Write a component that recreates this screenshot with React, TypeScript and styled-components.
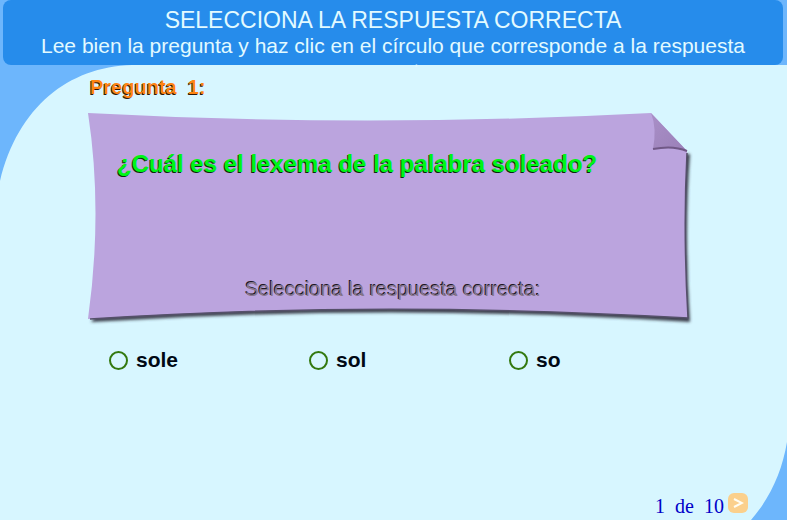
import React, { useState } from "react";
import styled, { createGlobalStyle } from "styled-components";

const GlobalStyle = createGlobalStyle`
  * { box-sizing: border-box; }
  body {
    margin: 0;
    background: #ffffff;
    font-family: "Liberation Sans", Arial, sans-serif;
  }
`;

const Page = styled.div`
  display: flex;
  flex-direction: column;
  min-height: calc(100vh - 3px);
  background: #6db6fc;
`;

const Header = styled.header`
  position: relative;
  z-index: 1;
  height: 65px;
  margin: 0 4px 0 3px;
  padding: 8px 24px 0;
  border-radius: 8px;
  background: #268ceb;
  color: #e2faff;
  text-align: center;
`;

const HeaderText = styled.div`
  height: 59px;
  overflow: hidden;
`;

const Title = styled.h1`
  margin: 0;
  font-size: 23px;
  line-height: 25px;
  font-weight: 400;
`;

const Instructions = styled.p`
  margin: 0;
  font-size: 21px;
  line-height: 25px;
`;

const Stage = styled.main`
  position: relative;
  flex: 1;
  display: flex;
  flex-direction: column;
  padding: 10px 94px 0 86px;
  background: #d7f6ff;
`;

const TopCorner = styled.svg`
  position: absolute;
  top: 0;
  left: 0;
`;

const BottomCorner = styled.svg`
  position: absolute;
  right: 0;
  bottom: 0;
`;

const QuestionLabel = styled.h2`
  position: relative;
  margin: 0 0 0 4px;
  font-size: 20px;
  line-height: 24px;
  white-space: pre;
  color: #ff8412;
  text-shadow: -1px 1px 0 #30180a;
`;

const Paper = styled.section`
  position: relative;
  display: flex;
  flex-direction: column;
  justify-content: space-between;
  height: 214px;
  margin-top: 12px;
  padding: 39px 24px 24px 31px;
`;

const PaperShape = styled.svg`
  position: absolute;
  inset: 0;
  width: 100%;
  height: 100%;
  overflow: visible;
`;

const Question = styled.p`
  position: relative;
  margin: 0;
  font-size: 24px;
  line-height: 28px;
  font-weight: 700;
  color: #00f514;
  text-shadow: -1px 1px 0 #062b10;
`;

const Prompt = styled.p`
  position: relative;
  margin: 0;
  text-align: center;
  font-size: 20px;
  line-height: 24px;
  color: #87778f;
  text-shadow: -1px -1px 0 #1d1723;
`;

const Options = styled.fieldset`
  display: grid;
  grid-template-columns: repeat(3, 1fr);
  margin: 22px -16px 0 0;
  padding: 0 0 0 23px;
  border: 0;
`;

const Option = styled.label`
  display: flex;
  align-items: center;
  gap: 8px;
  font-size: 21px;
  line-height: 26px;
  font-weight: 700;
  color: #000814;
`;

const Radio = styled.input`
  appearance: none;
  width: 19px;
  height: 19px;
  margin: 0;
  border: 2px solid #33790f;
  border-radius: 50%;
  &:checked {
    background: radial-gradient(#33790f 45%, transparent 50%);
  }
`;

const Pager = styled.nav`
  position: relative;
  display: flex;
  align-items: flex-end;
  justify-content: flex-end;
  gap: 4px;
  margin-top: auto;
  margin-right: -55px;
  padding-bottom: 3px;
`;

const Count = styled.span`
  display: flex;
  gap: 10px;
  font-family: "Liberation Serif", "Times New Roman", serif;
  font-size: 20px;
  line-height: 22px;
  color: #0000c8;
`;

const Next = styled.button`
  display: flex;
  align-items: center;
  justify-content: center;
  width: 20px;
  height: 20px;
  margin-bottom: 4px;
  padding: 0;
  border: 0;
  border-radius: 6px;
  background: #fbd08c;
`;

const answers = ["sole", "sol", "so"];

function PaperDrawing() {
  return (
    <PaperShape viewBox="0 0 607 214" preserveAspectRatio="none" aria-hidden="true">
      <defs>
        <filter id="soft" x="-5%" y="-5%" width="110%" height="115%">
          <feGaussianBlur stdDeviation="1.6" />
        </filter>
        <linearGradient id="fold" x1="0" y1="0" x2="1" y2="1">
          <stop offset="0" stopColor="#a98fc7" />
          <stop offset="1" stopColor="#9a80b8" />
        </linearGradient>
      </defs>
      <path
        d="M5 211 Q305 192 604 211 Q598 120 604 43 L596 43 L590 202 Q300 188 9 206 Z"
        fill="#3c414e"
        filter="url(#soft)"
      />
      <path
        d="M2 2 Q280 17 565 2 L601 40 Q597 120 602 207 Q290 189 2 208 Q17 100 2 2 Z"
        fill="#bba4de"
      />
      <path d="M601 42 Q597 120 602 207 Q290 189 4 208" fill="none" stroke="#55506a" strokeWidth="1.5" />
      <path d="M565 2 Q571 17 567 38 Q587 34 601 40 Z" fill="url(#fold)" />
      <path d="M567 38 Q587 34 601 40" fill="none" stroke="#705886" strokeWidth="2" />
    </PaperShape>
  );
}

export default function App() {
  const [answer, setAnswer] = useState("");
  return (
    <>
      <GlobalStyle />
      <Page>
        <Header>
          <HeaderText>
            <Title>SELECCIONA LA RESPUESTA CORRECTA</Title>
            <Instructions>
              Lee bien la pregunta y haz clic en el círculo que corresponde a la respuesta correcta
            </Instructions>
          </HeaderText>
        </Header>
        <Stage>
          <TopCorner width="132" height="116" viewBox="0 0 132 116" aria-hidden="true">
            <path d="M0 0 H132 C68 2 18 42 0 116 Z" fill="#6db6fc" />
          </TopCorner>
          <BottomCorner width="36" height="78" viewBox="0 0 36 78" aria-hidden="true">
            <path d="M36 0 C31 30 19 56 0 78 H36 Z" fill="#6db6fc" />
          </BottomCorner>
          <QuestionLabel>Pregunta  1:</QuestionLabel>
          <Paper>
            <PaperDrawing />
            <Question>¿Cuál es el lexema de la palabra soleado?</Question>
            <Prompt>Selecciona la respuesta correcta:</Prompt>
          </Paper>
          <Options aria-label="Respuestas">
            {answers.map((text) => (
              <Option key={text}>
                <Radio
                  type="radio"
                  name="respuesta"
                  value={text}
                  checked={answer === text}
                  onChange={() => setAnswer(text)}
                />
                {text}
              </Option>
            ))}
          </Options>
          <Pager aria-label="Preguntas">
            <Count>
              <span>1</span>
              <span>de</span>
              <span>10</span>
            </Count>
            <Next type="button" aria-label="Siguiente">
              <svg width="12" height="10" viewBox="0 0 12 10" aria-hidden="true">
                <path d="M2 1 L10 5 L2 9" fill="none" stroke="#fffdf2" strokeWidth="2" />
              </svg>
            </Next>
          </Pager>
        </Stage>
      </Page>
    </>
  );
}
